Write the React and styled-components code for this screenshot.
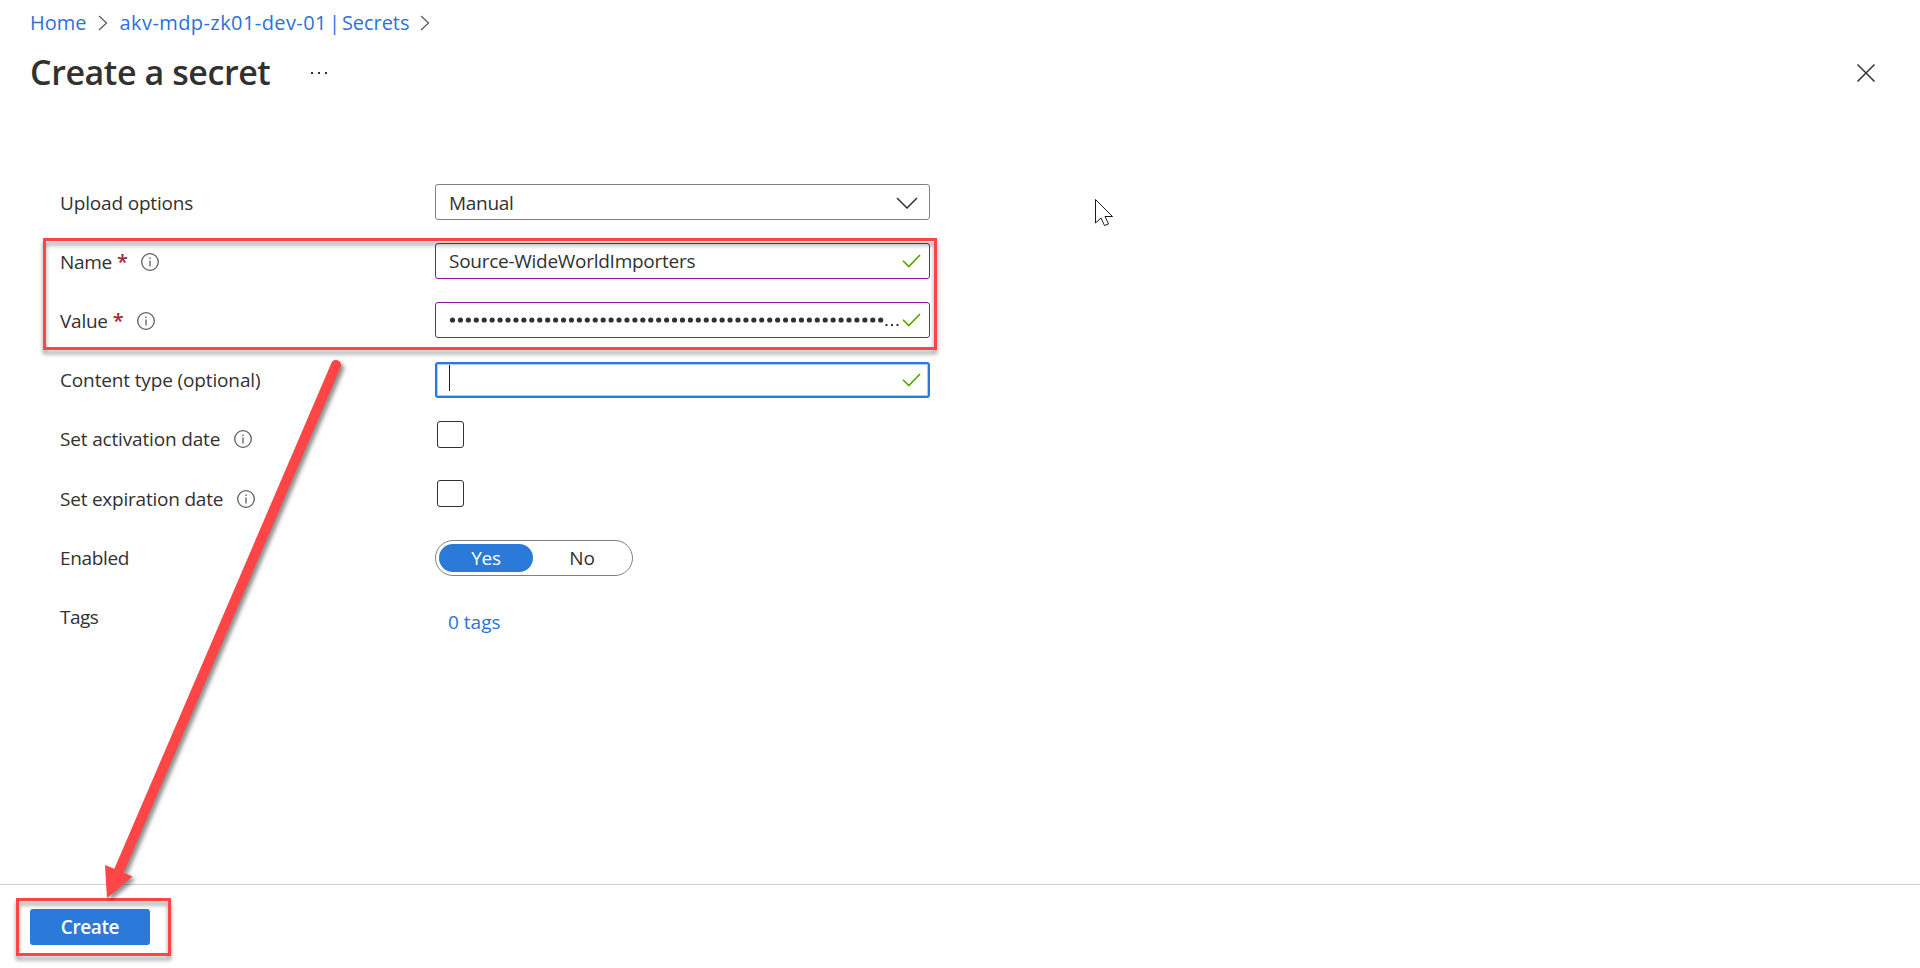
import React from "react";
import styled, { createGlobalStyle, css } from "styled-components";

const GlobalStyle = createGlobalStyle`
  * { box-sizing: border-box; }
  body { margin: 0; background: #fff; color: #323130; font-family: "Open Sans", "Noto Sans", sans-serif; font-size: 19px; line-height: 26px; overflow: hidden; }
`;

const Page = styled.div`
  position: relative;
  display: flex;
  flex-direction: column;
  width: 1920px;
  height: 968px;
  overflow: hidden;
  white-space: nowrap;
`;

const Text = styled.span`
  letter-spacing: ${(p) => p.$ls || 0}px;
`;

const Breadcrumb = styled.nav`
  display: flex;
  align-items: center;
  height: 45px;
  padding-left: 30px;
  color: #2b72d9;
  font-size: 20px;
`;

const Crumb = styled.a`
  word-spacing: -3.2px;
`;

const Separator = styled.svg`
  width: 10px;
  height: 16px;
  margin: 0 12px 0 11px;
  fill: none;
  stroke: #605e5c;
  stroke-width: 1.3;
`;

const TitleBar = styled.header`
  display: flex;
  align-items: center;
  height: 55px;
  padding: 0 44px 0 30px;
`;

const Title = styled.h1`
  margin: 0;
  padding-bottom: 2px;
  width: 281px;
  font-size: 34px;
  line-height: 46px;
  font-weight: 600;
  letter-spacing: -0.42px;
`;

const MoreIcon = styled.svg`
  width: 18px;
  height: 4px;
  fill: #323130;
`;

const CloseIcon = styled.svg`
  width: 20px;
  height: 20px;
  margin-left: auto;
  fill: none;
  stroke: #323130;
  stroke-width: 1.5;
`;

const Form = styled.main`
  display: flex;
  flex-direction: column;
  flex: 1;
  padding: 84px 0 0 60px;
`;

const Row = styled.div`
  display: flex;
  height: ${(p) => p.$h || 59}px;
`;

const Label = styled.label`
  display: flex;
  align-items: center;
  width: 375px;
  height: ${(p) => p.$h || 38}px;
`;

const Required = styled.span`
  margin-left: 5px;
  padding-bottom: 1px;
  color: #a4262c;
  font-size: 20px;
  font-weight: 600;
  letter-spacing: -1px;
`;

const Info = styled.svg`
  width: 18px;
  height: 18px;
  margin-left: 14px;
  fill: none;
  stroke: #605e5c;
`;

const Field = styled.div`
  display: flex;
  align-items: center;
  justify-content: space-between;
  width: 495px;
  height: 36px;
  padding: ${(p) => p.$top || 0}px 8px 0 13px;
  border: 1px solid ${(p) => p.$color || "#808080"};
  border-radius: 3px;
  ${(p) => p.$focus && css`border: 2px solid #2b79d8; box-shadow: inset 0 0 0 1px #a9cbf1; padding: 0 7px 0 12px;`}
`;

const Chevron = styled.svg`
  width: 22px;
  height: 12px;
  margin-right: 3px;
  fill: none;
  stroke: #323130;
  stroke-width: 1.5;
`;

const Check = styled.svg`
  width: 19px;
  height: 14px;
  flex: none;
  fill: none;
  stroke: #57a300;
  stroke-width: 1.6;
`;

const Dots = styled.svg`
  width: 452px;
  height: 18px;
  flex: none;
  fill: #323130;
`;

const Caret = styled.span`
  width: 1px;
  height: 26px;
  margin: -5px 0 0 0;
  background: #201f1e;
`;

const Checkbox = styled.span`
  width: 27px;
  height: 27px;
  margin: 1px 0 0 2px;
  border: 1px solid #323130;
  border-radius: 3px;
`;

const Toggle = styled.div`
  display: flex;
  width: 198px;
  height: 36px;
  margin-top: 1px;
  padding: 3px;
  border: 1px solid #808080;
  border-radius: 18px;
`;

const Option = styled.span`
  display: flex;
  flex: none;
  align-items: center;
  justify-content: center;
  width: ${(p) => (p.$active ? 94 : 98)}px;
  height: 28px;
  padding-bottom: 1px;
  border-radius: 14px;
  ${(p) => p.$active && css`background: #2b79d8; color: #fff;`}
`;

const TagsLink = styled.a`
  margin: 11px 0 0 13px;
  color: #2b72d9;
`;

const Footer = styled.footer`
  height: 84px;
  padding: 24px 0 0 30px;
  border-top: 1px solid #d2d0ce;
`;

const CreateButton = styled.button`
  width: 120px;
  height: 36px;
  padding: 0;
  border: 0;
  border-radius: 3px;
  background: #2b79d8;
  color: #fff;
  font: 600 19px/36px "Open Sans", "Noto Sans", sans-serif;
  letter-spacing: -0.4px;
`;

const Highlight = styled.div`
  position: absolute;
  left: ${(p) => p.$x}px;
  top: ${(p) => p.$y}px;
  width: ${(p) => p.$w}px;
  height: ${(p) => p.$h}px;
  border: 3px solid #ff4545;
  filter: drop-shadow(0 4px 2px rgba(0, 0, 0, 0.4));
`;

const Overlay = styled.svg`
  position: absolute;
  inset: 0;
  width: 1920px;
  height: 968px;
  pointer-events: none;
`;

const Arrow = styled.g`
  filter: drop-shadow(3px 3px 2px rgba(0, 0, 0, 0.45));
`;

const Sep = () => (
  <Separator viewBox="0 0 10 16"><path d="M1 1l7.5 7L1 15" /></Separator>
);
const InfoIcon = () => (
  <Info viewBox="0 0 18 18">
    <circle cx="9" cy="9" r="8.3" strokeWidth="1.3" />
    <path d="M9 7.5v6M9 4.5v1.5" strokeWidth="1.3" />
  </Info>
);
const Valid = () => (
  <Check viewBox="0 0 19 14"><path d="M1 6.8l5.8 5.7L18 1" /></Check>
);

export default function App() {
  return (
    <Page>
      <GlobalStyle />
      <Breadcrumb>
        <Text>Home</Text>
        <Sep />
        <Crumb><Text $ls={0.42}>akv-mdp-zk01-dev-01</Text> | <Text $ls={-0.05}>Secrets</Text></Crumb>
        <Sep />
      </Breadcrumb>
      <TitleBar>
        <Title>Create a secret</Title>
        <MoreIcon viewBox="0 0 18 4">
          <rect x="0" y="1" width="2" height="2" /><rect x="7" y="1" width="2" height="2" /><rect x="14" y="1" width="2" height="2" />
        </MoreIcon>
        <CloseIcon viewBox="0 0 20 20"><path d="M1.5 1.5l17 17M18.5 1.5l-17 17" /></CloseIcon>
      </TitleBar>
      <Form>
        <Row>
          <Label><Text $ls={-0.17}>Upload options</Text></Label>
          <Field $top={1}>
            <Text $ls={-0.3}>Manual</Text>
            <Chevron viewBox="0 0 22 12"><path d="M1 1l10 10L21 1" /></Chevron>
          </Field>
        </Row>
        <Row>
          <Label><Text $ls={-0.3}>Name</Text><Required>*</Required><InfoIcon /></Label>
          <Field $color="#881798"><Text $ls={-0.27}>Source-WideWorldImporters</Text><Valid /></Field>
        </Row>
        <Row $h={60}>
          <Label><Text $ls={-0.25}>Value</Text><Required>*</Required><InfoIcon /></Label>
          <Field $color="#881798">
            <Dots viewBox="0 0 452 18">
              {Array.from({ length: 55 }, (_, i) => <circle key={i} cx={3.5 + i * 7.93} cy="9" r="2.6" />)}
              <path d="M436.500 13h2v2h-2zM442 13h2v2h-2zM447.500 13h2v2h-2z" />
            </Dots>
            <Valid />
          </Field>
        </Row>
        <Row $h={58}>
          <Label $h={36}><Text $ls={-0.14}>Content type (optional)</Text></Label>
          <Field $focus><Caret /><Valid /></Field>
        </Row>
        <Row>
          <Label><Text $ls={-0.16}>Set activation date</Text><InfoIcon /></Label>
          <Checkbox />
        </Row>
        <Row $h={60}>
          <Label $h={39}><Text $ls={-0.22}>Set expiration date</Text><InfoIcon /></Label>
          <Checkbox />
        </Row>
        <Row>
          <Label><Text $ls={-0.35}>Enabled</Text></Label>
          <Toggle>
            <Option $active><Text $ls={-0.3}>Yes</Text></Option>
            <Option><Text>No</Text></Option>
          </Toggle>
        </Row>
        <Row>
          <Label><Text $ls={-0.5}>Tags</Text></Label>
          <TagsLink><Text>0 tags</Text></TagsLink>
        </Row>
      </Form>
      <Footer><CreateButton>Create</CreateButton></Footer>
      <Highlight $x={43} $y={238} $w={894} $h={112} />
      <Highlight $x={16} $y={898} $w={155} $h={58} />
      <Overlay viewBox="0 0 1920 968">
        <Arrow>
          <path d="M336 365L118 873" stroke="#ff4545" strokeWidth="10" strokeLinecap="round" />
          <path d="M105 865L132.500 876.500L107 898Z" fill="#ff4545" />
        </Arrow>
        <path d="M1095.500 199.500v23.500l5.500-5 3.500 7.500 4-1.500-3.500-7.500h7.500z" fill="#fff" stroke="#1b1a28" />
      </Overlay>
    </Page>
  );
}
